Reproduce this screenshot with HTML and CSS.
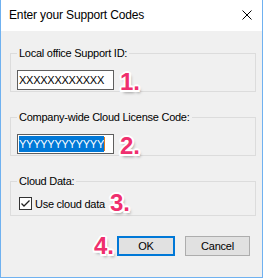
FILE: index.html
```html
<!DOCTYPE html>
<html>
<head>
<meta charset="utf-8">
<link rel="stylesheet" href="styles.css">
</head>
<body>
<div class="window">
  <div class="titlebar">
    <span class="title">Enter your Support Codes</span>
    <svg class="close" width="10" height="10" viewBox="0 0 10 10"><path d="M0.5 0.5 L9.5 9.5 M9.5 0.5 L0.5 9.5" stroke="#000" stroke-width="1" fill="none"/></svg>
  </div>
  <div class="content">
    <fieldset class="group">
      <legend>Local office Support ID:</legend>
      <div class="row">
        <div class="textbox">XXXXXXXXXXXX</div>
        <span class="num">1.</span>
      </div>
    </fieldset>
    <fieldset class="group">
      <legend>Company-wide Cloud License Code:</legend>
      <div class="row">
        <div class="textbox"><span class="sel">YYYYYYYYYYYY</span><span class="caret"></span></div>
        <span class="num">2.</span>
      </div>
    </fieldset>
    <fieldset class="group group-check">
      <legend>Cloud Data:</legend>
      <div class="row row-check">
        <svg class="checkbox" width="13" height="13" viewBox="0 0 13 13"><rect x="0.5" y="0.5" width="12" height="12" fill="#fff" stroke="#333"/><path d="M2.5 6.5 L5 9 L10.5 3.5" stroke="#222" stroke-width="1.3" fill="none"/></svg>
        <span class="check-label">Use cloud data</span>
        <span class="num num-check">3.</span>
      </div>
    </fieldset>
    <div class="buttons">
      <span class="num num-btn">4.</span>
      <button class="btn btn-ok">OK</button>
      <button class="btn btn-cancel">Cancel</button>
    </div>
  </div>
</div>
</body>
</html>
```
FILE: styles.css
```css
html, body {
  margin: 0;
  padding: 0;
  background: #fff;
}
.window {
  width: 263px;
  height: 278px;
  box-sizing: border-box;
  border: 1px solid #6fb1f0;
  border-top: none;
  display: flex;
  flex-direction: column;
  font-family: "Liberation Sans", Arial, sans-serif;
  color: #000;
}
.titlebar {
  height: 31px;
  flex: none;
  background: #fff;
  display: flex;
  align-items: center;
  justify-content: space-between;
  padding: 0 10px 0 8px;
}
.title {
  font-size: 12px;
  letter-spacing: -0.15px;
  line-height: 31px;
}
.close {
  display: block;
  margin-top: -1px;
}
.content {
  flex: 1;
  background: #f0f0f0;
  padding: 15px 6px 0 9px;
  font-size: 11px;
  letter-spacing: -0.25px;
}
.group {
  margin: 0 0 18px 0;
  border: 1px solid #dcdcdc;
  padding: 9px 0 1px 6px;
  min-width: 0;
}
.group legend {
  padding: 0 2px;
  line-height: 15px;
  font-size: 11px;
}
.row {
  display: flex;
  align-items: flex-start;
  height: 20px;
}
.textbox {
  width: 97px;
  height: 20px;
  box-sizing: border-box;
  border: 1px solid #5f5f5f;
  background: #fff;
  padding: 1px 1px;
  line-height: 16px;
  white-space: nowrap;
  overflow: hidden;
  display: flex;
  align-items: center;
}
.sel {
  background: #0078d7;
  color: #fff;
  line-height: 16px;
  display: inline-block;
}
.caret {
  display: inline-block;
  width: 1px;
  height: 14px;
  background: #e07a1c;
}
.num {
  font-family: "Liberation Sans", Arial, sans-serif;
  font-weight: 700;
  font-size: 24px;
  line-height: 24px;
  letter-spacing: 0;
  color: #ef2f6e;
  margin-left: 6px;
  text-shadow:
    -1.5px -1.5px 0 #fff, 1.5px -1.5px 0 #fff, -1.5px 1.5px 0 #fff, 1.5px 1.5px 0 #fff,
    0 -2px 0 #fff, 0 2px 0 #fff, -2px 0 0 #fff, 2px 0 0 #fff,
    2px 3px 3px rgba(0, 0, 0, 0.35);
}
.group-check {
  padding: 6px 0 3px 6px;
}
.row-check {
  height: 17px;
  align-items: center;
}
.checkbox {
  display: block;
  margin-left: 2px;
  flex: none;
}
.check-label {
  margin-left: 3px;
}
.num-check {
  margin-left: 5px;
  margin-top: -2px;
}
.buttons {
  margin-top: 3px;
  display: flex;
  justify-content: flex-end;
  align-items: center;
  padding-right: 6px;
}
.num-btn {
  margin-right: 3px;
  margin-left: 0;
}
.btn {
  height: 20px;
  box-sizing: border-box;
  margin: 0;
  padding: 0;
  background: #e1e1e1;
  border: 1px solid #adadad;
  font-family: "Liberation Sans", Arial, sans-serif;
  font-size: 11px;
  letter-spacing: -0.2px;
  color: #000;
}
.btn-ok {
  width: 58px;
  border: 2px solid #0078d7;
}
.btn-cancel {
  width: 65px;
  margin-left: 10px;
}
```
